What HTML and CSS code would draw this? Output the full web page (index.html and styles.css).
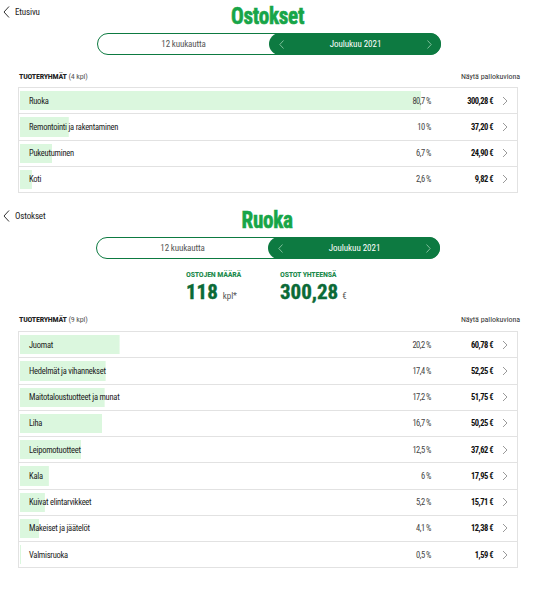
FILE: index.html
```html
<!DOCTYPE html>
<html lang="fi">
<head>
<meta charset="utf-8">
<title>Ostokset</title>
<link rel="stylesheet" href="styles.css">
</head>
<body>
<section class="view view-first">
  <header class="head">
    <a class="back" href="#"><svg class="back-ico" width="7" height="12" viewBox="0 0 7 12"><polyline points="6,0.5 1,6 6,11.5" fill="none" stroke="#333" stroke-width="1"/></svg><span>Etusivu</span></a>
    <h1 class="title">Ostokset</h1>
    <span></span>
  </header>
  <div class="toggle">
    <span class="tg-opt">12 kuukautta</span>
    <span class="tg-active">
      <svg width="5" height="9" viewBox="0 0 5 9"><polyline points="4.5,0.5 0.8,4.5 4.5,8.5" fill="none" stroke="#7fbf9a" stroke-width="1"/></svg>
      <span>Joulukuu 2021</span>
      <svg width="5" height="9" viewBox="0 0 5 9"><polyline points="0.5,0.5 4.2,4.5 0.5,8.5" fill="none" stroke="#7fbf9a" stroke-width="1"/></svg>
    </span>
  </div>
  <div class="list-head"><span><b>TUOTERYHMÄT</b> (4 kpl)</span><span class="pie">Näytä pallokuviona</span></div>
  <ul class="table">
    <li class="row" style="--p:80.7%"><span class="lbl">Ruoka</span><span class="pct">80,7 %</span><span class="amt">300,28 €</span><svg class="chev" width="6" height="10" viewBox="0 0 6 10"><polyline points="1,1 5,5 1,9" fill="none" stroke="#9a9a9a" stroke-width="1"/></svg></li>
    <li class="row" style="--p:10%"><span class="lbl">Remontointi ja rakentaminen</span><span class="pct">10 %</span><span class="amt">37,20 €</span><svg class="chev" width="6" height="10" viewBox="0 0 6 10"><polyline points="1,1 5,5 1,9" fill="none" stroke="#9a9a9a" stroke-width="1"/></svg></li>
    <li class="row" style="--p:6.7%"><span class="lbl">Pukeutuminen</span><span class="pct">6,7 %</span><span class="amt">24,90 €</span><svg class="chev" width="6" height="10" viewBox="0 0 6 10"><polyline points="1,1 5,5 1,9" fill="none" stroke="#9a9a9a" stroke-width="1"/></svg></li>
    <li class="row" style="--p:2.6%"><span class="lbl">Koti</span><span class="pct">2,6 %</span><span class="amt">9,82 €</span><svg class="chev" width="6" height="10" viewBox="0 0 6 10"><polyline points="1,1 5,5 1,9" fill="none" stroke="#9a9a9a" stroke-width="1"/></svg></li>
  </ul>
</section>

<section class="view view-second">
  <header class="head">
    <a class="back" href="#"><svg class="back-ico" width="7" height="12" viewBox="0 0 7 12"><polyline points="6,0.5 1,6 6,11.5" fill="none" stroke="#333" stroke-width="1"/></svg><span>Ostokset</span></a>
    <h1 class="title">Ruoka</h1>
    <span></span>
  </header>
  <div class="toggle">
    <span class="tg-opt">12 kuukautta</span>
    <span class="tg-active">
      <svg width="5" height="9" viewBox="0 0 5 9"><polyline points="4.5,0.5 0.8,4.5 4.5,8.5" fill="none" stroke="#7fbf9a" stroke-width="1"/></svg>
      <span>Joulukuu 2021</span>
      <svg width="5" height="9" viewBox="0 0 5 9"><polyline points="0.5,0.5 4.2,4.5 0.5,8.5" fill="none" stroke="#7fbf9a" stroke-width="1"/></svg>
    </span>
  </div>
  <div class="stats">
    <div class="stat"><div class="stat-lbl">OSTOJEN MÄÄRÄ</div><div class="stat-val">118<small>kpl*</small></div></div>
    <div class="stat"><div class="stat-lbl">OSTOT YHTEENSÄ</div><div class="stat-val">300,28<small class="eur">€</small></div></div>
  </div>
  <div class="list-head"><span><b>TUOTERYHMÄT</b> (9 kpl)</span><span class="pie">Näytä pallokuviona</span></div>
  <ul class="table">
    <li class="row" style="--p:20.2%"><span class="lbl">Juomat</span><span class="pct">20,2 %</span><span class="amt">60,78 €</span><svg class="chev" width="6" height="10" viewBox="0 0 6 10"><polyline points="1,1 5,5 1,9" fill="none" stroke="#9a9a9a" stroke-width="1"/></svg></li>
    <li class="row" style="--p:17.4%"><span class="lbl">Hedelmät ja vihannekset</span><span class="pct">17,4 %</span><span class="amt">52,25 €</span><svg class="chev" width="6" height="10" viewBox="0 0 6 10"><polyline points="1,1 5,5 1,9" fill="none" stroke="#9a9a9a" stroke-width="1"/></svg></li>
    <li class="row" style="--p:17.2%"><span class="lbl">Maitotaloustuotteet ja munat</span><span class="pct">17,2 %</span><span class="amt">51,75 €</span><svg class="chev" width="6" height="10" viewBox="0 0 6 10"><polyline points="1,1 5,5 1,9" fill="none" stroke="#9a9a9a" stroke-width="1"/></svg></li>
    <li class="row" style="--p:16.7%"><span class="lbl">Liha</span><span class="pct">16,7 %</span><span class="amt">50,25 €</span><svg class="chev" width="6" height="10" viewBox="0 0 6 10"><polyline points="1,1 5,5 1,9" fill="none" stroke="#9a9a9a" stroke-width="1"/></svg></li>
    <li class="row" style="--p:12.5%"><span class="lbl">Leipomotuotteet</span><span class="pct">12,5 %</span><span class="amt">37,62 €</span><svg class="chev" width="6" height="10" viewBox="0 0 6 10"><polyline points="1,1 5,5 1,9" fill="none" stroke="#9a9a9a" stroke-width="1"/></svg></li>
    <li class="row" style="--p:6%"><span class="lbl">Kala</span><span class="pct">6 %</span><span class="amt">17,95 €</span><svg class="chev" width="6" height="10" viewBox="0 0 6 10"><polyline points="1,1 5,5 1,9" fill="none" stroke="#9a9a9a" stroke-width="1"/></svg></li>
    <li class="row" style="--p:5.2%"><span class="lbl">Kuivat elintarvikkeet</span><span class="pct">5,2 %</span><span class="amt">15,71 €</span><svg class="chev" width="6" height="10" viewBox="0 0 6 10"><polyline points="1,1 5,5 1,9" fill="none" stroke="#9a9a9a" stroke-width="1"/></svg></li>
    <li class="row" style="--p:4.1%"><span class="lbl">Makeiset ja jäätelöt</span><span class="pct">4,1 %</span><span class="amt">12,38 €</span><svg class="chev" width="6" height="10" viewBox="0 0 6 10"><polyline points="1,1 5,5 1,9" fill="none" stroke="#9a9a9a" stroke-width="1"/></svg></li>
    <li class="row" style="--p:0.5%"><span class="lbl">Valmisruoka</span><span class="pct">0,5 %</span><span class="amt">1,59 €</span><svg class="chev" width="6" height="10" viewBox="0 0 6 10"><polyline points="1,1 5,5 1,9" fill="none" stroke="#9a9a9a" stroke-width="1"/></svg></li>
  </ul>
</section>
</body>
</html>
```

FILE: styles.css
```css
* { box-sizing: border-box; }
html, body { margin: 0; padding: 0; background: #fff; }
body {
  width: 533px;
  font-family: "Roboto Condensed", "Liberation Sans Narrow", "DejaVu Sans Condensed", "DejaVu Sans", sans-serif;
  font-stretch: condensed;
  font-size: 8.5px;
  letter-spacing: -0.25px;
  color: #222;
}
.view-first { padding-top: 4px; }
.view-second { padding-top: 15px; }

.head {
  display: grid;
  grid-template-columns: 1fr auto 1fr;
  align-items: start;
  height: 27px;
}
.back {
  display: flex;
  align-items: center;
  gap: 5px;
  padding-left: 3px;
  padding-top: 2px;
  color: #222;
  text-decoration: none;
  font-size: 9px;
  letter-spacing: -0.15px;
}
.title {
  margin: 0;
  font-size: 24px;
  line-height: 25px;
  font-weight: 700;
  color: #17a548;
  -webkit-text-stroke: 0.6px #17a548;
  letter-spacing: -0.3px;
  transform: translateX(1px) scaleX(0.88);
}

.toggle {
  width: 344px;
  height: 22px;
  margin: 2px 0 0 97px;
  border: 1px solid #0d7a41;
  border-radius: 11px;
  display: grid;
  grid-template-columns: 1fr 1fr;
}
.view-second .toggle { margin-left: 96px; }
.tg-opt {
  display: flex;
  align-items: center;
  justify-content: center;
  color: #555;
  font-size: 9px;
  letter-spacing: -0.15px;
}
.tg-active {
  margin: -1px -1px -1px 0;
  background: #0d7a41;
  border-radius: 11px;
  color: #fff;
  display: flex;
  align-items: center;
  justify-content: space-between;
  padding: 0 9px 0 10px;
  font-size: 9px;
  letter-spacing: -0.05px;
}

.list-head {
  display: flex;
  justify-content: space-between;
  align-items: center;
  margin: 15px 13px 0 19px;
  height: 12px;
  font-size: 8px;
  letter-spacing: -0.15px;
  color: #555;
}
.list-head b { color: #222; font-weight: 700; letter-spacing: -0.2px; }
.pie { color: #333; font-size: 8px; letter-spacing: -0.05px; }

.table {
  list-style: none;
  margin: 5px 15px 0 18px;
  padding: 0;
  border: 1px solid #e2e2e2;
  border-bottom: none;
}
.row {
  height: 26.25px;
  border-bottom: 1px solid #e2e2e2;
  display: grid;
  grid-template-columns: 1fr 60px 62px 15px;
  align-items: center;
  padding: 0 9px 0 10px;
  background: linear-gradient(#dbf7de, #dbf7de) no-repeat 1px 3px / calc(var(--p) - 1px) calc(100% - 6px);
}
.lbl { color: #222; white-space: nowrap; }
.pct { text-align: right; color: #444; letter-spacing: -0.5px; }
.amt { text-align: right; font-weight: 700; color: #111; letter-spacing: -0.5px; }
.chev { justify-self: end; }

.stats {
  display: grid;
  grid-template-columns: 94px auto;
  margin: 11px 0 0 186px;
}
.stat-lbl {
  font-size: 8px;
  font-weight: 700;
  color: #1c8a4c;
  line-height: 9px;
  letter-spacing: -0.2px;
}
.stat-val {
  font-size: 21px;
  font-weight: 700;
  color: #0b6a37;
  -webkit-text-stroke: 0.4px #0b6a37;
  line-height: 20px;
  margin-top: 3px;
  letter-spacing: 0;
}
.stat-val small {
  font-size: 9px;
  font-weight: 400;
  color: #555;
  -webkit-text-stroke: 0;
  margin-left: 5px;
  letter-spacing: -0.1px;
}
.stat-val small.eur { margin-left: 4px; }
.view-second .list-head { margin-top: 7px; }
.view-second .table { margin-top: 6px; }
```
